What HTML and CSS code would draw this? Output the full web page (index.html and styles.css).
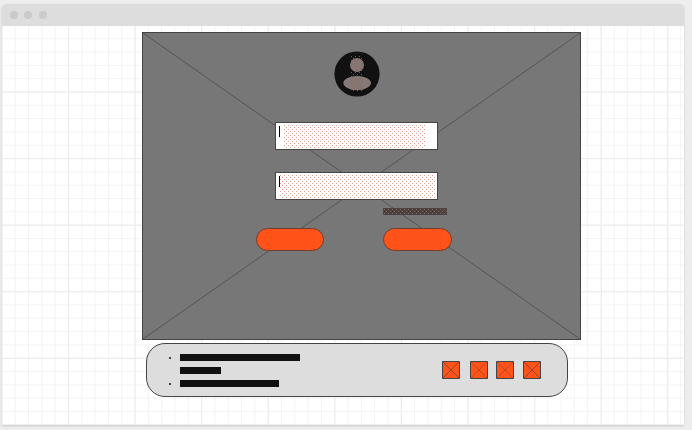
FILE: index.html
```html
<!DOCTYPE html>
<html lang="en">
<head>
<meta charset="utf-8">
<title>Wireframe</title>
<link rel="stylesheet" href="styles.css">
</head>
<body>
<div class="window">
  <header class="titlebar"><i></i><i></i><i></i></header>
  <main class="canvas">
    <section class="hero">
      <svg class="cross" viewBox="0 0 437 306" preserveAspectRatio="none"><path d="M0 0 437 306M437 0 0 306"/></svg>
      <form class="login">
        <svg class="avatar" viewBox="0 0 46 46">
          <defs>
            <pattern id="dots" width="4" height="4" patternUnits="userSpaceOnUse"><path d="M1 1h1v1H1zM3 3h1v1H3z" fill="#b5452c"/></pattern>
            <pattern id="field-dots" width="4" height="4" patternUnits="userSpaceOnUse"><path d="M1 0h1v1H1zM3 2h1v1H3z" fill="#e09a8a"/></pattern>
            <pattern id="link-dots" width="4" height="4" patternUnits="userSpaceOnUse"><path d="M1 1h1v1H1zM3 3h1v1H3z" fill="#75605a"/></pattern>
            <pattern id="button-dots" width="4" height="4" patternUnits="userSpaceOnUse"><path d="M1 1h1v1H1zM3 3h1v1H3z" fill="#f04a18"/></pattern>
          </defs>
          <circle cx="23" cy="23" r="22.6" fill="#111"/>
          <path d="M17 4h12v37H17z" fill="url(#dots)"/>
          <circle cx="23" cy="14" r="7" fill="#877571"/>
          <path d="M9.300 32C9.300 28 16 25 23 25s14 3 14 7-7 7.200-14 7.200S9.300 36 9.300 32z" fill="#857a78"/>
          <path d="M17 26h12v12.500H17z" fill="#877571"/>
        </svg>
        <div class="field"><span class="caret"></span><svg class="dots short"><rect width="100%" height="100%" fill="url(#field-dots)"/></svg></div>
        <div class="field second"><span class="caret"></span><svg class="dots full"><rect width="100%" height="100%" fill="url(#field-dots)"/></svg></div>
        <svg class="link"><rect width="100%" height="100%" fill="url(#link-dots)"/></svg>
        <div class="actions">
          <div class="button"><svg><rect width="100%" height="100%" fill="url(#button-dots)"/></svg></div>
          <div class="button wide"><svg><rect width="100%" height="100%" fill="url(#button-dots)"/></svg></div>
        </div>
      </form>
    </section>
    <footer class="footer">
      <ul class="lines"><li><b class="line-long"></b></li><li class="plain"><b class="line-short"></b></li><li><b class="line-mid"></b></li></ul>
      <div class="icons">
        <svg viewBox="0 0 18 18"><path d="M.5.5h17v17H.5z"/><path class="x" d="m1 1 16 16M17 1 1 17"/></svg>
        <svg viewBox="0 0 18 18"><path d="M.5.5h17v17H.5z"/><path class="x soft" d="m1 1 16 16M17 1 1 17"/></svg>
        <svg viewBox="0 0 18 18"><path d="M.5.5h17v17H.5z"/><path class="x soft" d="m1 1 16 16M17 1 1 17"/></svg>
        <svg viewBox="0 0 18 18"><path d="M.5.5h17v17H.5z"/><path class="x" d="m1 1 16 16M17 1 1 17"/></svg>
      </div>
    </footer>
  </main>
</div>
</body>
</html>
```
FILE: styles.css
```css
* { box-sizing: border-box; }
body { margin: 0; height: 430px; padding: 4px 8px 4px 2px; background: #ededed; overflow: hidden; }
.window { width: 682px; height: 421px; border-radius: 4px 4px 0 0; overflow: hidden; background: #fff; box-shadow: 0 1px 2px #c9c9c9; }
.titlebar { height: 22px; background: #ddd; display: flex; align-items: center; padding-left: 8px; gap: 6px; }
.titlebar i { width: 8px; height: 8px; border-radius: 50%; background: #cacaca; }
.titlebar i:last-child { margin-left: 1px; }
.canvas {
  height: 400px; padding: 6px 0 0 140px;
  background-image:
    linear-gradient(90deg, #ebebeb 1px, transparent 1px),
    linear-gradient(#ebebeb 1px, transparent 1px),
    linear-gradient(90deg, #f3f3f3 1px, transparent 1px),
    linear-gradient(#f3f3f3 1px, transparent 1px);
  background-size: 66.6px 66.6px, 66.6px 66.6px, 13.32px 13.32px, 13.32px 13.32px;
  background-position: 66px 0, 0 65.5px, 66px 0, 0 65.5px;
}
.hero { position: relative; width: 439px; height: 308px; background: #777; border: 1px solid #444; }
.cross { position: absolute; inset: 0; width: 437px; height: 306px; fill: none; stroke: #555; stroke-width: 1; }
.login { position: relative; display: flex; flex-direction: column; padding: 18px 127px 0 113px; align-items: flex-start; }
.avatar { width: 46px; height: 46px; margin: 0 0 25px 78px; }
.field { width: 163px; height: 28px; margin: 0 0 22px 19px; background: #fff; border: 1px solid #444; display: flex; padding: 2px 0 0 3px; }
.second { margin-bottom: 8px; }
.caret { width: 1px; height: 11px; margin-top: 1px; background: #000; }
.dots { height: 23px; }
.short { width: 143px; margin-left: 3px; }
.full { width: 157px; margin-left: -1px; }
.second .caret { position: relative; }
.link { width: 64px; height: 7px; margin: 0 0 13px 127px; background: #4c4341; }
.actions { display: flex; gap: 59px; }
.button { width: 68px; height: 23px; padding: 2px 9px; border: 1px solid #6c3f32; border-radius: 12px; background: #ff5319; }
.button svg { display: block; width: 48px; height: 16px; }
.wide { width: 69px; }
.footer { width: 422px; height: 54px; margin: 3px 0 0 4px; padding: 10px 26px 0 22px; display: flex; justify-content: space-between; background: #ddd; border: 1px solid #444; border-radius: 19px; }
.lines { margin: 0; padding: 0; list-style: none; display: flex; flex-direction: column; gap: 6px; }
.lines li { display: flex; align-items: center; gap: 9px; height: 7px; }
.lines li::before { content: ""; width: 2px; height: 2px; background: #444; }
.lines .plain::before { background: none; }
.lines b { height: 7px; background: #111; }
.line-long { width: 120px; }
.line-short { width: 41px; }
.line-mid { width: 99px; }
.icons { display: flex; gap: 9px; padding-top: 7px; }
.icons svg { width: 18px; height: 18px; fill: #ff5319; stroke: #444; }
.icons svg:nth-child(2) { margin-left: 1px; }
.icons svg:nth-child(3) { margin-left: -1px; }
.icons .x { stroke: #823e28; stroke-width: .8; }
.icons .soft { stroke: #a8452a; }
```
